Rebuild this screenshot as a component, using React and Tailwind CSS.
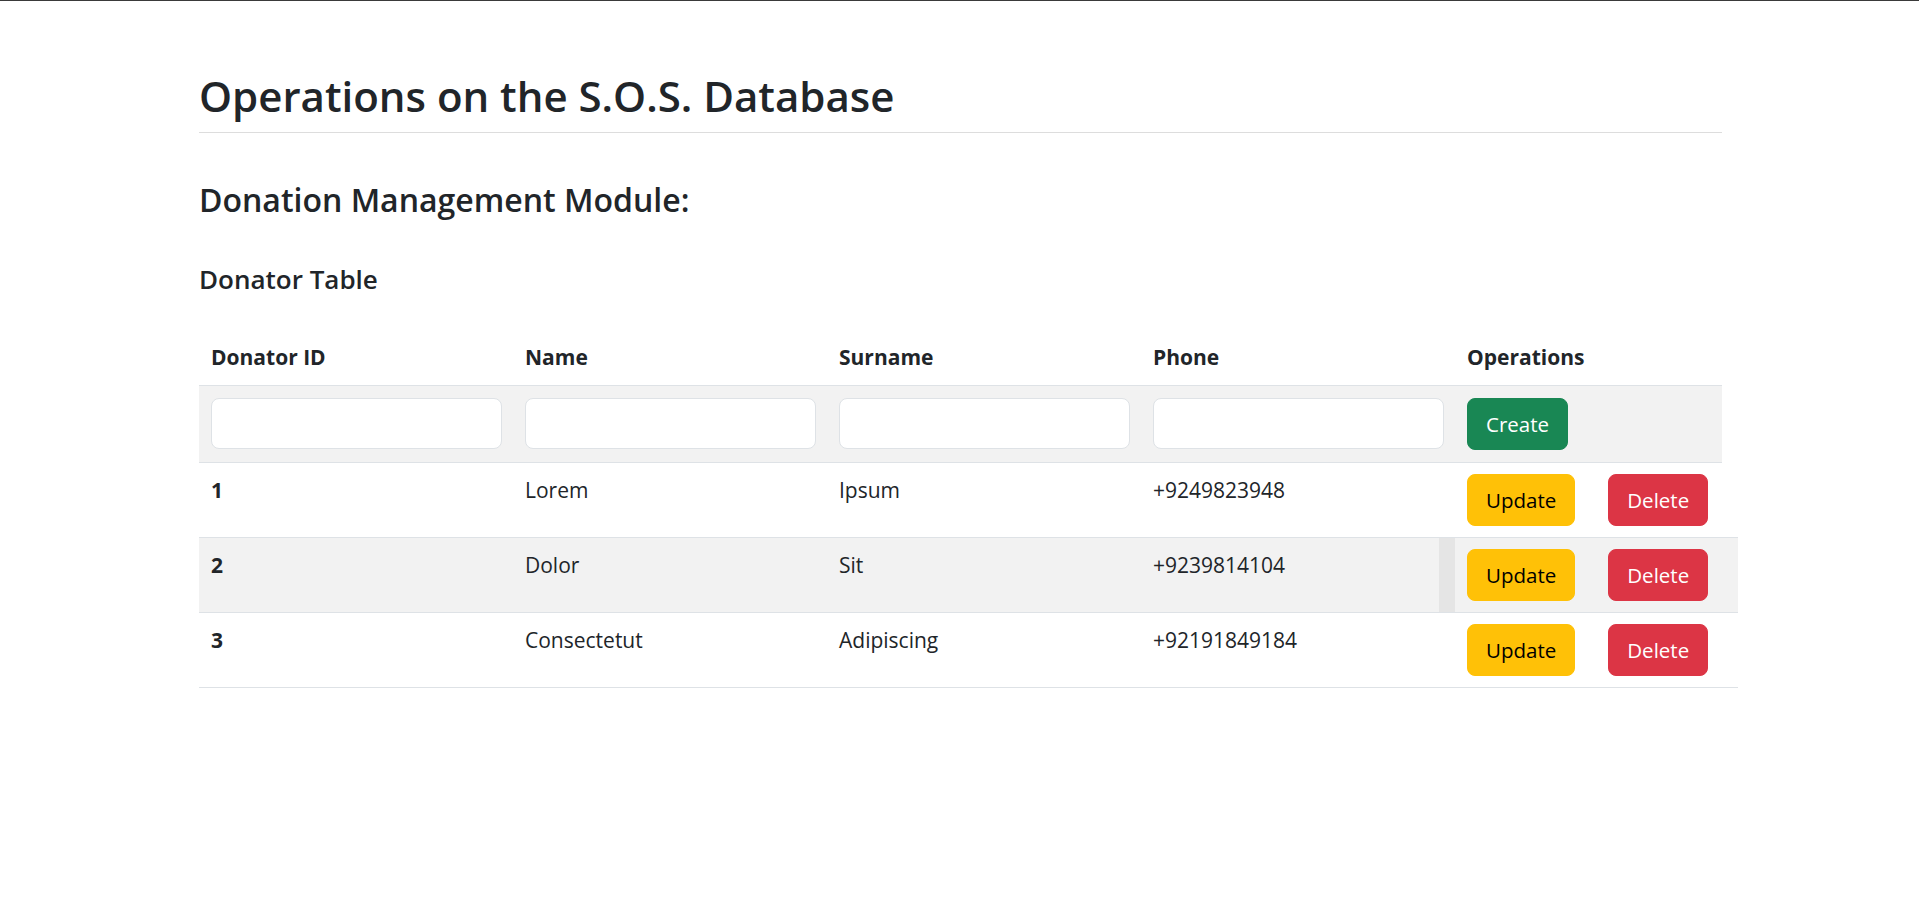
import React from "react";

const rows = [
  { id: "1", name: "Lorem", surname: "Ipsum", phone: "+9249823948" },
  { id: "2", name: "Dolor", surname: "Sit", phone: "+9239814104" },
  { id: "3", name: "Consectetut", surname: "Adipiscing", phone: "+92191849184" },
];

function Btn({ color, children }) {
  const cls = {
    green: "bg-[#198754] border-[#198754] text-white",
    yellow: "bg-[#ffc107] border-[#ffc107] text-black",
    red: "bg-[#dc3545] border-[#dc3545] text-white",
  }[color];
  return (
    <button
      className={`h-[52px] px-[18px] rounded-[8px] border text-[20.5px] leading-[31px] ${cls}`}
    >
      {children}
    </button>
  );
}

export default function App() {
  return (
    <div
      className="min-h-screen bg-white text-[#212529]"
      style={{ fontFamily: '"Open Sans", "Noto Sans", sans-serif' }}
    >
      <div className="h-px bg-[#3a3a3a]" />
      <div className="ml-[199px] w-[1523px] pt-[70px]">
        <h1 className="text-[42px] leading-[50px] font-semibold">
          Operations on the S.O.S. Database
        </h1>
        <div className="mt-[11px] h-px bg-[#dddddd]" />
        <h2 className="mt-[48px] text-[32px] leading-[38px] font-semibold">
          Donation Management Module:
        </h2>
        <h4 className="mt-[45px] text-[26px] leading-[31px] font-semibold">
          Donator Table
        </h4>

        <div className="mt-[35px] text-[21px] leading-[31px]">
          {/* header */}
          <div className="grid grid-cols-[314px_314px_314px_314px_1fr] w-[1523px] border-b border-[#dee2e6] font-bold">
            <div className="px-3 py-3">Donator ID</div>
            <div className="px-3 py-3">Name</div>
            <div className="px-3 py-3">Surname</div>
            <div className="px-3 py-3">Phone</div>
            <div className="px-3 py-3">Operations</div>
          </div>
          {/* input row */}
          <div className="grid grid-cols-[314px_314px_314px_314px_1fr] w-[1523px] border-b border-[#dee2e6] bg-[#f2f2f2]">
            {[0, 1, 2, 3].map((i) => (
              <div key={i} className="pl-3 pr-[11px] py-3">
                <input
                  className="block w-full h-[51px] bg-white border border-[#dee2e6] rounded-[8px] outline-none"
                  type="text"
                />
              </div>
            ))}
            <div className="px-3 py-3 flex items-start">
              <Btn color="green">Create</Btn>
            </div>
          </div>
          {/* data rows */}
          {rows.map((r, i) => (
            <div
              key={r.id}
              className={`grid grid-cols-[314px_314px_314px_314px_1fr] w-[1539px] border-b border-[#dee2e6] ${
                i === 1 ? "bg-[#f2f2f2]" : "bg-white"
              }`}
            >
              <div className="px-3 pt-3 font-bold">{r.id}</div>
              <div className="px-3 pt-3">{r.name}</div>
              <div className="px-3 pt-3">{r.surname}</div>
              <div
                className={`px-3 pt-3 ${
                  i === 1 ? "shadow-[inset_-16px_0_0_#e5e5e5]" : ""
                }`}
              >
                {r.phone}
              </div>
              <div className="px-3 py-[11px] flex items-start">
                <Btn color="yellow">Update</Btn>
                <div className="ml-[33px]">
                  <Btn color="red">Delete</Btn>
                </div>
              </div>
            </div>
          ))}
        </div>
      </div>
    </div>
  );
}
